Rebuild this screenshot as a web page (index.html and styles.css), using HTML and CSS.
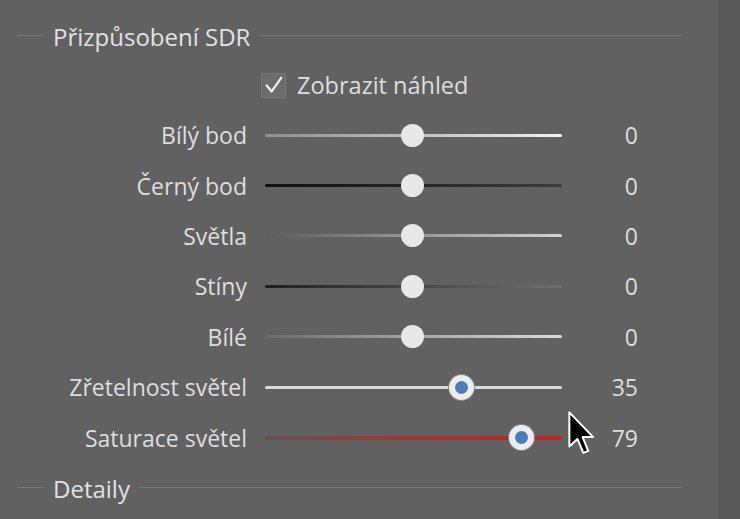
FILE: index.html
```html
<!DOCTYPE html>
<html lang="cs">
<head>
  <meta charset="UTF-8" />
  <meta name="viewport" content="width=device-width, initial-scale=1" />
  <title>Přizpůsobení SDR</title>
  <link rel="stylesheet" href="styles.css">
</head>
<body>
  <div class="window">
    <div class="panel">
      <div class="section-head">
        <span class="rule short"></span>
        <span class="section-title">Přizpůsobení SDR</span>
        <span class="rule"></span>
      </div>

      <label class="preview">
        <span class="box">
          <svg viewBox="0 0 24 24" width="22" height="22"><path d="M4 12.5 L9.5 19 L20 4" fill="none" stroke="#f2f2f2" stroke-width="2.4" stroke-linecap="round" stroke-linejoin="round"/></svg>
        </span>
        Zobrazit náhled
      </label>

      <div class="sliders">
        <div class="row">
          <span class="name">Bílý bod</span>
          <div class="track t-white"><span class="knob" style="left: 49.7%"></span></div>
          <span class="value">0</span>
        </div>
        <div class="row">
          <span class="name">Černý bod</span>
          <div class="track t-black"><span class="knob" style="left: 49.7%"></span></div>
          <span class="value">0</span>
        </div>
        <div class="row">
          <span class="name">Světla</span>
          <div class="track t-lights"><span class="knob" style="left: 49.7%"></span></div>
          <span class="value">0</span>
        </div>
        <div class="row">
          <span class="name">Stíny</span>
          <div class="track t-shadows"><span class="knob" style="left: 49.7%"></span></div>
          <span class="value">0</span>
        </div>
        <div class="row">
          <span class="name">Bílé</span>
          <div class="track t-whites"><span class="knob" style="left: 49.7%"></span></div>
          <span class="value">0</span>
        </div>
        <div class="row">
          <span class="name">Zřetelnost světel</span>
          <div class="track t-clarity"><span class="knob active" style="left: 66%"></span></div>
          <span class="value">35</span>
        </div>
        <div class="row">
          <span class="name">Saturace světel</span>
          <div class="track t-sat"><span class="knob active" style="left: 86.2%"></span></div>
          <span class="value">79</span>
          <svg class="cursor" viewBox="0 0 12 20" width="27" height="45">
            <path d="M0.6 0.6 L0.6 15.8 L4.2 12.4 L6.8 18.6 L9 17.7 L6.5 11.6 L11.2 11.6 Z" fill="#000" stroke="#fff" stroke-width="0.9" stroke-linejoin="round"/>
          </svg>
        </div>
      </div>

      <div class="section-head">
        <span class="rule short"></span>
        <span class="section-title">Detaily</span>
        <span class="rule"></span>
      </div>
    </div>
    <div class="scrollbar"></div>
  </div>
</body>
</html>
```

FILE: styles.css
```css
body {
  margin: 0;
  background: #616161;
  color: #dedede;
  font-family: 'Open Sans', 'Noto Sans', sans-serif;
  font-size: 23px;
}
.window {
  display: flex;
  height: 519px;
  overflow: hidden;
}
.panel {
  flex: 1;
  padding: 16px 36px 0 17px;
}
.scrollbar {
  width: 22px;
  background: #585858;
}
.section-head {
  display: flex;
  align-items: center;
  gap: 9px;
  height: 38px;
}
.rule {
  flex: 1;
  height: 1px;
  background: #787878;
}
.rule.short {
  flex: 0 0 27px;
}
.section-title {
  font-size: 24px;
  color: #e2e2e2;
  position: relative;
  top: 1px;
}
.preview {
  display: flex;
  align-items: center;
  gap: 11px;
  margin: 12px 0 0 244px;
  height: 38px;
  font-size: 23.5px;
}
.box {
  width: 23px;
  height: 23px;
  border: 1px solid #777;
  background: #6c6c6c;
  display: flex;
  align-items: center;
  justify-content: center;
}
.sliders {
  margin-top: 6px;
}
.row {
  display: grid;
  grid-template-columns: 230px 297px 58px;
  column-gap: 18px;
  align-items: center;
  height: 50.4px;
  position: relative;
}
.row .value {
  text-align: right;
}
.name {
  text-align: right;
}
.track {
  position: relative;
  height: 3px;
  border-radius: 2px;
}
.knob {
  position: absolute;
  top: 50%;
  width: 23px;
  height: 23px;
  margin: -11.5px 0 0 -11.5px;
  border-radius: 50%;
  background: #e8e8e8;
  box-sizing: border-box;
}
.knob.active {
  width: 25px;
  height: 25px;
  margin: -12.5px 0 0 -12.5px;
  border: 6px solid #ededed;
  background: #4d7db8;
  box-shadow: 0 0 0 1px #8a8a8a;
}
.t-white { background: linear-gradient(to right, #8e8e8e, #f2f2f2); }
.t-black { background: linear-gradient(to right, #101010, #3c3c3c); }
.t-lights { background: linear-gradient(to right, #5c5c5c, #d2d2d2); }
.t-shadows { background: linear-gradient(to right, #1e1e1e, #707070); }
.t-whites { background: linear-gradient(to right, #6c6c6c, #dcdcdc); }
.t-clarity { background: #dadada; }
.t-sat {
  height: 4px;
  background: linear-gradient(to right, #6a5050, #9e3434 50%, #c42222);
}
.cursor {
  position: absolute;
  left: 551px;
  top: -1px;
}
.section-head:last-child {
  margin-top: 6px;
}
```
